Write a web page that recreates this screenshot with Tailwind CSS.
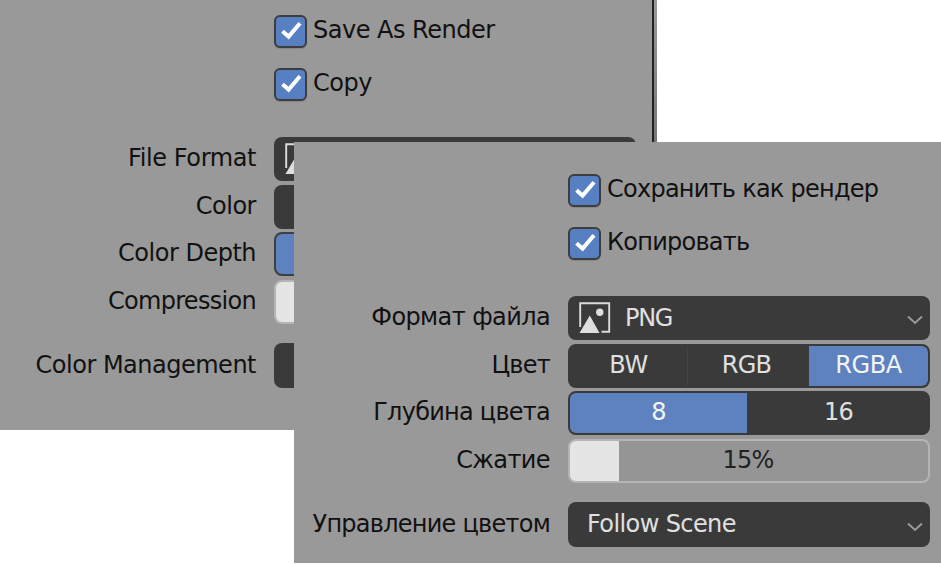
<!DOCTYPE html>
<html lang="ru">
<head>
<meta charset="utf-8">
<title>Save options</title>
<script src="https://cdn.jsdelivr.net/npm/@tailwindcss/browser@4"></script>
</head>
<body class="bg-white">
<svg class="hidden">
  <symbol id="check" viewBox="0 0 33 33"><path d="M8.5 16.3 L14.6 21.6 L26 8.2" fill="none" stroke="#fff" stroke-width="4"/></symbol>
  <symbol id="image" viewBox="0 0 32 32"><path d="M1.2 25V1.2H30.2V29.8H22.5" fill="none" stroke="#dcdcdc" stroke-width="1.9"/><path d="M.5 31 L10.8 13.5 L20.5 31Z" fill="#dedede"/><circle cx="20.8" cy="10.3" r="3.7" fill="#dedede"/></symbol>
  <symbol id="chevron" viewBox="0 0 16 10"><path d="M1 1.5 L8 8 L15 1.5" fill="none" stroke="#9b9b9b" stroke-width="1.9"/></symbol>
</svg>
<main class="relative h-[564px] w-[941px] overflow-hidden bg-white font-['DejaVu_Sans',sans-serif] text-[24px] leading-[44px] whitespace-nowrap text-[#111]">

  <section class="absolute left-0 top-0 h-[430px] w-[657px] bg-[#999] pt-[15px] tracking-[-0.5px]">
    <div class="absolute right-[3px] top-0 h-[143px] w-[2px] bg-[#222]"></div>
    <div class="absolute right-0 top-0 h-[143px] w-[3px] bg-linear-to-b from-[#999] to-[#777]"></div>
    <div class="flex flex-col gap-[20px] pl-[274px]">
      <div class="flex h-[33px] items-center gap-[6px]"><span class="size-[33px] rounded-[6px] border-2 border-[#3d3d3d] bg-[#5680c2] shadow-[0_1px_1px_#00000022]"><svg class="-m-[2px] size-[33px]"><use href="#check"/></svg></span><span class="-mt-[3px]">Save As Render</span></div>
      <div class="flex h-[33px] items-center gap-[6px]"><span class="size-[33px] rounded-[6px] border-2 border-[#3d3d3d] bg-[#5680c2] shadow-[0_1px_1px_#00000022]"><svg class="-m-[2px] size-[33px]"><use href="#check"/></svg></span><span class="-mt-[3px]">Copy</span></div>
    </div>
    <div class="mt-[36px] grid grid-cols-[256px_362px] gap-x-[18px] gap-y-[3.5px] text-right">
      <span class="-mt-[1px] tracking-[-0.4px]">File Format</span><div class="flex h-[44px] items-center rounded-[8px] bg-[#3a3a3a] pl-[11px]"><svg class="size-[32px]"><use href="#image"/></svg></div>
      <span class="-mt-[1px]">Color</span><div class="h-[44px] rounded-[8px] bg-[#3a3a3a]"></div>
      <span class="-mt-[1px]">Color Depth</span><div class="h-[44px] rounded-[8px] border-2 border-[#3f3f3f] bg-[#5d82bf]"></div>
      <span class="-mt-[1px] tracking-[-0.7px]">Compression</span><div class="h-[44px] rounded-[8px] border-2 border-[#b5b5b5] bg-[#e5e5e5]"></div>
      <span class="mt-[16px]">Color Management</span><div class="mt-[16px] h-[45px] rounded-[8px] bg-[#3a3a3a]"></div>
    </div>
  </section>

  <section class="absolute left-[294px] top-[142px] h-[421px] w-[647px] bg-[#999] pt-[32px] tracking-[-0.75px]">
    <div class="flex flex-col gap-[20px] pl-[274px]">
      <div class="flex h-[33px] items-center gap-[6px]"><span class="size-[33px] rounded-[6px] border-2 border-[#3d3d3d] bg-[#5680c2] shadow-[0_1px_1px_#00000022]"><svg class="-m-[2px] size-[33px]"><use href="#check"/></svg></span><span class="-mt-[3px]">Сохранить как рендер</span></div>
      <div class="flex h-[33px] items-center gap-[6px]"><span class="size-[33px] rounded-[6px] border-2 border-[#3d3d3d] bg-[#5680c2] shadow-[0_1px_1px_#00000022]"><svg class="-m-[2px] size-[33px]"><use href="#check"/></svg></span><span class="-mt-[3px]">Копировать</span></div>
    </div>
    <div class="mt-[36px] grid grid-cols-[256px_362px] gap-x-[18px] gap-y-[3.5px] text-right">
      <span class="-mt-[1px] tracking-[-0.6px]">Формат файла</span>
      <div class="flex h-[44px] items-center rounded-[8px] bg-[#3a3a3a] pl-[11px] pr-[7px] text-[#e0e0e0]"><svg class="size-[32px]"><use href="#image"/></svg><span class="-mt-[1px] ml-[14px] tracking-[-1.3px]">PNG</span><svg class="mt-[4px] ml-auto h-[10px] w-[16px]"><use href="#chevron"/></svg></div>
      <span class="-mt-[1px]">Цвет</span>
      <div class="grid h-[44px] grid-cols-[118px_121px_1fr] overflow-hidden rounded-[8px] border-2 border-[#3a3a3a] bg-[#3a3a3a] text-center leading-[39px] tracking-[-0.4px] text-[#e0e0e0]"><span class="border-r border-[#444]">BW</span><span class="pr-[4px] tracking-[-0.8px]">RGB</span><span class="rounded-r-[6px] bg-[#5d82bf] text-[#f4f4f4]">RGBA</span></div>
      <span class="-mt-[1px]">Глубина цвета</span>
      <div class="grid h-[44px] grid-cols-[177px_1fr] rounded-[8px] border-2 border-[#3a3a3a] bg-[#3a3a3a] text-center leading-[39px] text-[#e0e0e0]"><span class="rounded-l-[6px] bg-[#5d82bf] text-[#f4f4f4]">8</span><span class="pl-[2px]">16</span></div>
      <span class="-mt-[1px] tracking-[-0.6px]">Сжатие</span>
      <div class="h-[44px] rounded-[8px] border-2 border-[#b5b5b5] bg-linear-to-r from-[#e5e5e5] from-[49px] to-[#959595] to-[49px] pr-[2px] text-center leading-[39px] text-[#222]">15%</div>
      <span class="mt-[16px]">Управление цветом</span>
      <div class="mt-[16px] flex h-[45px] items-center rounded-[8px] bg-[#3a3a3a] pl-[19px] pr-[7px] text-[#e0e0e0]"><span class="-mt-[2px] tracking-[-0.6px]">Follow Scene</span><svg class="mt-[4px] ml-auto h-[10px] w-[16px]"><use href="#chevron"/></svg></div>
    </div>
  </section>
</main>
</body>
</html>
